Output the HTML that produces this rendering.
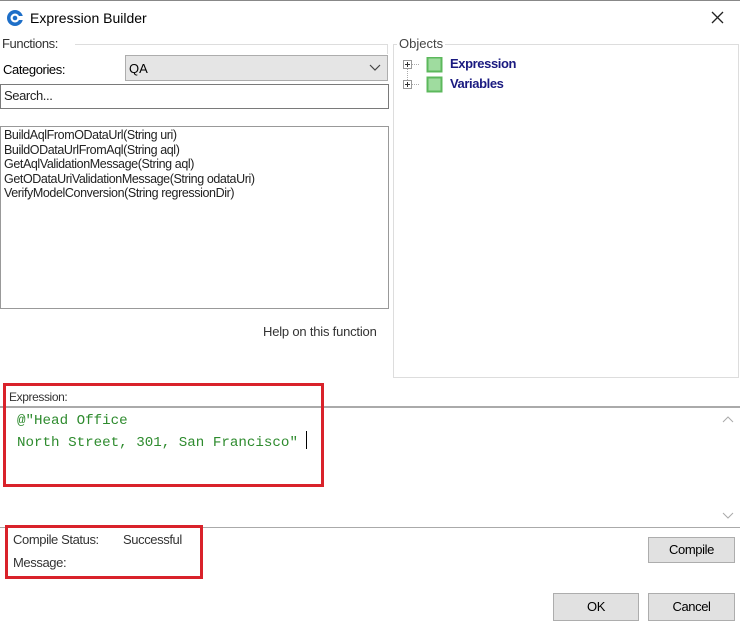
<!DOCTYPE html>
<html><head><style>
*{margin:0;padding:0;box-sizing:border-box}
body{width:740px;height:620px;background:#fff;font-family:"Liberation Sans",sans-serif;font-size:12px;color:#000;position:relative;overflow:hidden}
.a{position:absolute;white-space:nowrap}
.c{letter-spacing:-0.4px}
.btn{position:absolute;background:#e1e1e1;border:1px solid #adadad;text-align:center;font-size:13px;letter-spacing:-0.4px}
</style></head><body>
<div class="a" style="left:0;top:0;width:740px;height:1px;background:#888"></div>
<svg class="a" style="left:6px;top:9px" width="18" height="18" viewBox="0 0 18 18"><circle cx="9" cy="9" r="8" fill="#1e6fc8"/><circle cx="9" cy="9" r="4.5" fill="#fff"/><circle cx="9" cy="9" r="2.3" fill="#1e6fc8"/><rect x="12" y="7" width="6" height="4" fill="#fff"/></svg>
<div class="a" style="left:30px;top:10px;font-size:14px">Expression Builder</div>
<svg class="a" style="left:711px;top:11px" width="13" height="13"><path d="M1 1L12 12M12 1L1 12" stroke="#222" stroke-width="1.3"/></svg>

<div class="a" style="left:75px;top:44px;width:313px;height:1px;background:#ddd"></div>
<div class="a" style="left:387px;top:44px;width:1px;height:10px;background:#ddd"></div>
<div class="a c" style="left:2px;top:36px;font-size:13px;color:#333">Functions:</div>
<div class="a c" style="left:3px;top:62px;font-size:13px">Categories:</div>
<div class="a" style="left:125px;top:55px;width:263px;height:26px;background:#e5e5e5;border:1px solid #adadad"></div>
<div class="a" style="left:129px;top:61px;font-size:13px">QA</div>
<svg class="a" style="left:369px;top:64px" width="12" height="8"><path d="M1 1L6 6L11 1" stroke="#444" fill="none" stroke-width="1.2"/></svg>
<div class="a" style="left:0;top:84px;width:389px;height:25px;border:1px solid #7a7a7a"></div>
<div class="a c" style="left:4px;top:88px;font-size:13px;color:#222">Search...</div>
<div class="a" style="left:0;top:126px;width:389px;height:183px;border:1px solid #999"></div>
<div class="a c" style="left:4px;top:128px;line-height:14.5px;font-size:12.5px;color:#222">BuildAqlFromODataUrl(String uri)<br>BuildODataUrlFromAql(String aql)<br>GetAqlValidationMessage(String aql)<br>GetODataUriValidationMessage(String odataUri)<br>VerifyModelConversion(String regressionDir)</div>
<div class="a" style="left:263px;top:324px;font-size:13px;letter-spacing:-0.2px;color:#333">Help on this function</div>

<div class="a" style="left:393px;top:44px;width:346px;height:334px;border:1px solid #ddd"></div>
<div class="a" style="left:397px;top:36px;background:#fff;padding:0 2px;font-size:13px;color:#444">Objects</div>
<svg class="a" style="left:403px;top:57px" width="40" height="36"><rect x="0.5" y="3.5" width="8" height="8" fill="#fff" stroke="#999"/><path d="M2 7.5h5M4.5 5v5" stroke="#333"/><rect x="0.5" y="23.5" width="8" height="8" fill="#fff" stroke="#999"/><path d="M2 27.5h5M4.5 25v5" stroke="#333"/><path d="M9 7.5h7M9 27.5h7M4.5 12v11" stroke="#aaa" stroke-dasharray="1 1"/><rect x="24.5" y="0.5" width="14" height="14" fill="#9fdc9f" stroke="#5cb85c" stroke-width="2"/><rect x="24.5" y="20.5" width="14" height="14" fill="#9fdc9f" stroke="#5cb85c" stroke-width="2"/></svg>
<div class="a c" style="left:450px;top:56px;font-weight:bold;color:#1a1a80;font-size:13px">Expression</div>
<div class="a c" style="left:450px;top:76px;font-weight:bold;color:#1a1a80;font-size:13px">Variables</div>

<div class="a c" style="left:9px;top:390px;font-size:12px;color:#333">Expression:</div>
<div class="a" style="left:0;top:406px;width:740px;height:122px;border-top:2px solid #aaa;border-bottom:1px solid #aaa"></div>
<div class="a" style="left:17px;top:410px;font-family:'Liberation Mono',monospace;font-size:14.2px;line-height:22px;color:#2e8b2e">@"Head Office<br>North Street, 301, San Francisco"</div>
<div class="a" style="left:306px;top:431px;width:1px;height:18px;background:#000"></div>
<svg class="a" style="left:722px;top:416px" width="12" height="8"><path d="M1 6L6 1L11 6" stroke="#aaa" fill="none"/></svg>
<svg class="a" style="left:722px;top:512px" width="12" height="8"><path d="M1 1L6 6L11 1" stroke="#aaa" fill="none"/></svg>

<div class="a" style="left:3px;top:383px;width:321px;height:104px;border:3px solid #d9222a"></div>
<div class="a" style="left:5px;top:525px;width:198px;height:54px;border:3px solid #d9222a"></div>
<div class="a c" style="left:13px;top:532px;font-size:13px;color:#333">Compile Status:</div>
<div class="a c" style="left:123px;top:532px;font-size:13px;color:#333">Successful</div>
<div class="a c" style="left:13px;top:555px;font-size:13px;color:#333">Message:</div>

<div class="btn" style="left:648px;top:537px;width:87px;height:26px;line-height:24px">Compile</div>
<div class="btn" style="left:553px;top:593px;width:86px;height:28px;line-height:26px">OK</div>
<div class="btn" style="left:648px;top:593px;width:87px;height:28px;line-height:26px">Cancel</div>
</body></html>
